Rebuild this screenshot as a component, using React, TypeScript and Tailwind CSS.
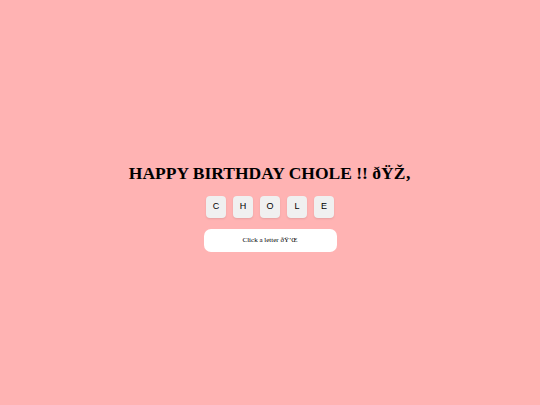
import React, { useState } from 'react';

const letters = ['C', 'H', 'O', 'L', 'E'];

export default function App() {
  const [picked, setPicked] = useState<string | null>(null);

  return (
    <div className="min-h-screen w-full bg-[#ffb3b3] flex flex-col items-center justify-center font-['Liberation_Serif',serif] text-black">
      <h1 className="text-[17.5px] font-bold leading-none mt-[12px]">HAPPY BIRTHDAY CHOLE !! ðŸŽ‚</h1>
      <div className="flex gap-[7px] mt-[13px]">
        {letters.map((l) => (
          <button
            key={l}
            onClick={() => setPicked(l)}
            className="w-[20px] h-[22px] rounded-[4px] bg-[#f0f0f0] shadow-[0_1px_2px_rgba(0,0,0,0.1)] font-['Liberation_Sans',sans-serif] text-[9px] text-black flex items-center justify-center"
          >
            {l}
          </button>
        ))}
      </div>
      <div className="mt-[11px] w-[133px] h-[23px] rounded-[7px] bg-white flex items-center justify-center text-[7px]">
        {picked ? `Letter ${picked}` : 'Click a letter ðŸ’Œ'}
      </div>
    </div>
  );
}
